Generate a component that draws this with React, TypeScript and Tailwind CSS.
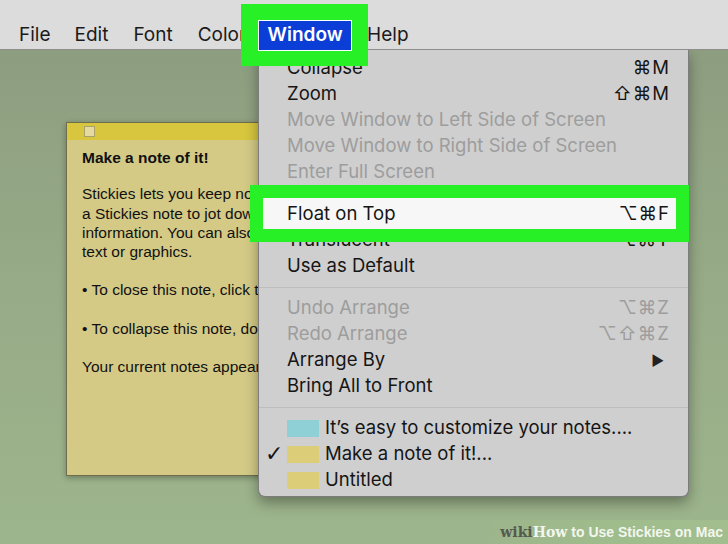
import React from "react";

const SF = { fontFamily: "Inter, 'Noto Sans', sans-serif" };
const HV = { fontFamily: "'Liberation Sans', Arial, sans-serif" };

type Row = { label: string; sc?: string; disabled?: boolean; arrow?: boolean };

function MenuRow({ label, sc, disabled, arrow }: Row) {
  return (
    <div
      className={`h-[26px] flex items-center pl-[28px] pr-[18px] ${
        disabled ? "text-[#9d9d9d]" : "text-[#151515]"
      }`}
    >
      <span className="flex-1 whitespace-nowrap">{label}</span>
      {sc && <span className="whitespace-nowrap tracking-[1px]">{sc}</span>}
      {arrow && <span className="text-[14px] mr-[6px] text-[#222]">▶</span>}
    </div>
  );
}

function Sep() {
  return (
    <div className="h-[16px] flex items-center">
      <div className="h-px w-full bg-[#bdbdbd]" />
    </div>
  );
}

function NoteRow({ color, label, checked }: { color: string; label: string; checked?: boolean }) {
  return (
    <div className="h-[26px] flex items-center text-[#151515]">
      <span className="w-[28px] pl-[6px] text-[22px] leading-none font-semibold" style={{ fontFamily: "'DejaVu Sans', sans-serif" }}>
        {checked ? "✓" : ""}
      </span>
      <span className={`w-[32px] h-[17px] mr-[6px] ${color}`} />
      <span className="whitespace-nowrap">{label}</span>
    </div>
  );
}

export default function App() {
  return (
    <div
      className="relative w-[728px] h-[544px] overflow-hidden bg-gradient-to-b from-[#8b9b7e] via-[#96aa87] to-[#9db58c]"
      style={SF}
    >
      {/* Menu bar */}
      <div className="relative z-30 h-[50px] bg-[#dcdcdc] border-b border-[#8e8e8e] flex items-start pt-[20px] pl-[19px] text-[19px] text-[#1a1a1a]">
        <div className="h-[31px] flex items-center mr-[24px]">File</div>
        <div className="h-[31px] flex items-center mr-[25px]">Edit</div>
        <div className="h-[31px] flex items-center mr-[25px]">Font</div>
        <div className="h-[31px] flex items-center mr-[12px]">Color</div>
        <div className="relative h-[31px] w-[94px]">
          <div className="absolute -left-[17px] -top-[16px] -right-[16px] -bottom-[15px] bg-[#27f027]" />
          <div className="relative h-full w-full bg-[#0b3ed6] border border-white flex items-center justify-center text-white font-semibold">
            Window
          </div>
        </div>
        <div className="h-[31px] flex items-center ml-[15px]">Help</div>
      </div>

      {/* Sticky note window */}
      <div
        className="absolute left-[66px] top-[122px] w-[300px] h-[354px] bg-[#d4ca86] border border-[#6f6d4c] shadow-[0_2px_6px_rgba(0,0,0,0.3)]"
        style={HV}
      >
        <div className="h-[17px] bg-[#d7c63e] flex items-center pl-[17px]">
          <div className="w-[11px] h-[11px] bg-[#e5dba0] border border-[#a9a06a]" />
        </div>
        <div className="pl-[15px] pt-[8px] text-[15.5px] leading-[19.3px] text-[#111] whitespace-nowrap">
          <div className="font-bold">Make a note of it!</div>
          <div className="h-[17px]" />
          <div>Stickies lets you keep notes (like these) on your desktop.</div>
          <div>a Stickies note to jot down reminders, lists, or other</div>
          <div>information. You can also use notes to store frequently used</div>
          <div>text or graphics.</div>
          <div className="h-[19px]" />
          <div>• To close this note, click the close button.</div>
          <div className="h-[19px]" />
          <div>• To collapse this note, double-click the title bar.</div>
          <div className="h-[19px]" />
          <div>Your current notes appear in the Window menu.</div>
        </div>
      </div>

      {/* Window dropdown menu */}
      <div className="absolute z-20 left-[258px] top-[50px] w-[431px] bg-[#cfcfcf] border-x border-b border-[#7c7c7c] rounded-b-[7px] shadow-[0_6px_14px_rgba(0,0,0,0.35)] pt-[5px] pb-[3px] text-[18.5px]">
        <MenuRow label="Collapse" sc="⌘M" />
        <MenuRow label="Zoom" sc="⇧⌘M" />
        <MenuRow label="Move Window to Left Side of Screen" disabled />
        <MenuRow label="Move Window to Right Side of Screen" disabled />
        <MenuRow label="Enter Full Screen" disabled />
        <Sep />
        <div className="relative z-10 h-[26px]">
          <div className="absolute -left-[9px] -top-[16px] -right-[1px] -bottom-[15px] border-[13px] border-[#27f027] bg-[#f7f7f7]" />
          <div className="relative h-full flex items-center pl-[28px] pr-[18px] text-[#151515]">
            <span className="flex-1">Float on Top</span>
            <span className="tracking-[1px]">⌥⌘F</span>
          </div>
        </div>
        <MenuRow label="Translucent" sc="⌥⌘T" />
        <MenuRow label="Use as Default" />
        <Sep />
        <MenuRow label="Undo Arrange" sc="⌥⌘Z" disabled />
        <MenuRow label="Redo Arrange" sc="⌥⇧⌘Z" disabled />
        <MenuRow label="Arrange By" arrow />
        <MenuRow label="Bring All to Front" />
        <Sep />
        <NoteRow color="bg-[#8fcfd6]" label="It’s easy to customize your notes...." />
        <NoteRow color="bg-[#dccd78]" label="Make a note of it!..." checked />
        <NoteRow color="bg-[#dccd78]" label="Untitled" />
      </div>

      {/* watermark */}
      <div className="absolute right-0 bottom-0 h-[24px] pl-[22px] pr-[5px] flex items-center bg-gradient-to-r from-transparent via-[#9fbc8c] to-[#a2be8f] [clip-path:polygon(14px_0,100%_0,100%_100%,0_100%)] whitespace-nowrap">
        <span className="text-[14px] font-bold text-[#555a4f]" style={{ fontFamily: "'DejaVu Serif', serif" }}>
          wiki
        </span>
        <span className="text-[14px] font-bold text-[#f2f6ee]" style={{ fontFamily: "'DejaVu Serif', serif" }}>
          How
        </span>
        <span className="ml-[4px] text-[14px] font-bold text-[#f2f6ee]" style={HV}>
          to Use Stickies on Mac
        </span>
      </div>
    </div>
  );
}
